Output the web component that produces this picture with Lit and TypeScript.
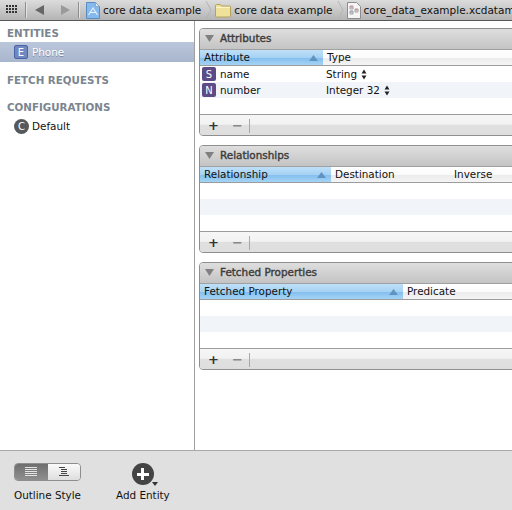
import { LitElement, html, css, svg } from "lit";
import { customElement } from "lit/decorators.js";

const triangle = svg`<svg width="9" height="7" viewBox="0 0 9 7"><path d="M0 0h9L4.500 7z" fill="#808080" /></svg>`;

const sortArrow = svg`<svg class="sort" width="9" height="6" viewBox="0 0 9 6"><path d="M4.500 0L9 6H0z" fill="#5f93c2" /></svg>`;

const stepper = svg`<svg width="6" height="11" viewBox="0 0 6 11"><path d="M3 0.500L5.500 4.500H0.500z M3 10.500L0.500 6.500H5.500z" fill="#222" /></svg>`;

const projectIcon = svg`<svg width="14" height="17" viewBox="0 0 14 17">
	<path d="M0.500 0.500h9l4 4v12h-13z" fill="#86b9ec" stroke="#5a8cc4" />
	<path d="M9.500 0.500v4h4z" fill="#e4eef8" stroke="#8aa8c8" />
	<path d="M2.500 13L7 6L11.500 13M4.500 10.500h5" fill="none" stroke="#e8f2fc" stroke-width="1.1" />
</svg>`;

const folderIcon = svg`<svg width="16" height="15" viewBox="0 0 16 15">
	<path d="M0.500 2.500a1 1 0 0 1 1-1h4l1 1.500h8a1 1 0 0 1 1 1v9a1 1 0 0 1-1 1h-13a1 1 0 0 1-1-1z" fill="#efe09a" stroke="#b3a360" />
	<path d="M1 4.500h14" stroke="#fbf4cc" />
</svg>`;

const modelIcon = svg`<svg width="14" height="17" viewBox="0 0 14 17">
	<path d="M0.500 0.500h9l4 4v12h-13z" fill="#f5f5f5" stroke="#8c8c8c" />
	<path d="M3 4h3v3h-3zM3 9h3v3h-3zM8 7h3v3h-3z" fill="none" stroke="#a0a0a0" />
	<path d="M3.500 5h2M8.500 8h2" stroke="#c86a6a" />
	<path d="M3.500 10h2" stroke="#6a8ac8" />
</svg>`;

const crumbSep = svg`<svg class="crumb-sep" width="7" height="20" viewBox="0 0 7 20"><path d="M1 1L6 10L1 19" fill="none" stroke="#b4b4b4" /></svg>`;

const gridIcon = svg`<svg width="11" height="10" viewBox="0 0 11 10"><path d="M0 0h2v2H0zM3 0h2v2H3zM6 0h2v2H6zM9 0h2v2H9zM0 3h2v2H0zM3 3h2v2H3zM6 3h2v2H6zM9 3h2v2H9zM0 6h2v2H0zM3 6h2v2H3zM6 6h2v2H6zM9 6h2v2H9z" fill="#333" /></svg>`;

const listFlat = svg`<svg width="12" height="10" viewBox="0 0 12 10"><path d="M0 .5h12M0 2.500h12M0 4.500h12M0 6.500h12M0 8.500h12" stroke="#e4e4e4" /></svg>`;

const listTree = svg`<svg width="10" height="10" viewBox="0 0 10 10"><path d="M0 .5h6M2 2.500h6M2 4.500h6M2 6.500h6M0 8.500h10" stroke="#444" /></svg>`;

interface Panel {
	title: string;
	columns: { label: string; width?: number }[];
	rows?: { badge: string; name: string; type: string }[];
}

const panels: Panel[] = [
	{
		title: "Attributes",
		columns: [{ label: "Attribute", width: 123 }, { label: "Type" }],
		rows: [
			{ badge: "S", name: "name", type: "String" },
			{ badge: "N", name: "number", type: "Integer 32" },
		],
	},
	{
		title: "Relationships",
		columns: [{ label: "Relationship", width: 131 }, { label: "Destination", width: 119 }, { label: "Inverse" }],
	},
	{
		title: "Fetched Properties",
		columns: [{ label: "Fetched Property", width: 203 }, { label: "Predicate" }],
	},
];

@customElement("app-root")
export class AppRoot extends LitElement {
	static styles = css`
		:host {
			display: block;
			width: 512px;
			height: 510px;
			overflow: hidden;
			font-family: "DejaVu Sans", sans-serif;
			font-size: 10.4px;
			color: #111;
			background: #fff;
		}

		.app {
			display: grid;
			grid-template-rows: 21px 429px 60px;
			height: 510px;
		}

		.toolbar {
			display: flex;
			align-items: center;
			height: 20px;
			border-bottom: 1px solid #595959;
			background: linear-gradient(#dcdcdc, #b4b4b4);
			white-space: nowrap;
			overflow: hidden;
		}

		.grid-btn {
			display: flex;
			margin: 0 8px 0 6px;
		}

		.tool-sep {
			flex: none;
			width: 1px;
			height: 16px;
			background: #8e8e8e;
			box-shadow: 1px 0 0 #e4e4e4;
		}

		.nav {
			display: flex;
			align-items: center;
			gap: 17px;
			margin: 0 8px 0 9px;
		}

		.nav-left {
			border-style: solid;
			border-width: 5px 9px 5px 0;
			border-color: transparent #666 transparent transparent;
		}

		.nav-right {
			border-style: solid;
			border-width: 5px 0 5px 9px;
			border-color: transparent transparent transparent #9a9a9a;
		}

		.crumb {
			display: flex;
			align-items: center;
			gap: 3px;
			font-size: 10.5px;
			color: #111;
		}

		.crumb-first {
			margin-left: 7px;
		}

		.crumb-sep {
			flex: none;
			margin: 0 3px 0 4px;
		}

		.body {
			display: grid;
			grid-template-columns: 195px 1fr;
			min-height: 0;
		}

		.sidebar {
			border-right: 1px solid #a0a0a0;
			background: #fff;
		}

		.group {
			line-height: 13px;
			padding-left: 7px;
			font-weight: bold;
			font-size: 10.3px;
			color: #7b8590;
		}

		.group.entities {
			padding-top: 6px;
			padding-bottom: 2px;
		}

		.group.fetch {
			margin-top: 12px;
		}

		.group.configs {
			margin: 14px 0 2px;
		}

		.item {
			display: flex;
			align-items: center;
			gap: 4px;
			height: 20px;
			padding-left: 14px;
		}

		.item.selected {
			background: linear-gradient(#bac6da, #a8b6ce);
			color: #fff;
			text-shadow: 0 1px 0 #7f8ca3;
		}

		.badge {
			display: flex;
			align-items: center;
			justify-content: center;
			box-sizing: border-box;
			width: 14px;
			height: 14px;
			border-radius: 2px;
			font-size: 10px;
			color: #fff;
			text-shadow: none;
		}

		.badge.entity {
			background: #7187c0;
			border: 1px solid #4a62a8;
		}

		.badge.attr {
			background: #5c4b84;
		}

		.badge.config {
			border-radius: 50%;
			width: 15px;
			height: 15px;
			margin-right: -1px;
			background: #56595c;
		}

		.main {
			display: flex;
			flex-direction: column;
			gap: 9px;
			padding: 7px 0 0 4px;
			overflow: hidden;
		}

		.panel {
			flex: none;
			width: 330px;
			height: 108px;
			box-sizing: border-box;
			border: 1px solid #8f8f8f;
			border-radius: 4px;
			background: #fff;
			overflow: hidden;
			display: flex;
			flex-direction: column;
		}

		.panel-head {
			display: flex;
			align-items: center;
			gap: 6px;
			flex: none;
			height: 21px;
			padding: 0 0 2px 5px;
			box-sizing: border-box;
			font-size: 10.4px;
			-webkit-text-stroke: 0.4px #3c3c3c;
			color: #3c3c3c;
			background: linear-gradient(#dedede, #c4c4c4);
			border-bottom: 1px solid #a0a0a0;
		}

		.cols {
			display: flex;
			flex: none;
			height: 16px;
			box-sizing: border-box;
			border-bottom: 1px solid #9c9c9c;
			background: linear-gradient(#fff 0, #fbfbfb 50%, #ececec 55%, #f4f4f4 100%);
		}

		.col {
			display: flex;
			align-items: center;
			justify-content: space-between;
			box-sizing: border-box;
			padding: 0 4px 2px;
			flex: none;
		}

		.col.sorted {
			background: linear-gradient(#bfe0f8 0, #a6d2f4 50%, #84bfee 55%, #a4d4f6 100%);
		}

		.sort {
			margin: 2px 1px 0 0;
		}

		.rows {
			flex: 1;
			display: grid;
			grid-template-rows: repeat(3, 16px);
		}

		.row {
			display: flex;
			align-items: center;
		}

		.row.alt {
			background: #f1f5fa;
		}

		.name-cell {
			display: flex;
			align-items: center;
			gap: 4px;
			width: 123px;
			padding-left: 2px;
			box-sizing: border-box;
		}

		.type-cell {
			display: flex;
			align-items: center;
			gap: 4px;
			padding-left: 3px;
		}

		.panel-foot {
			display: flex;
			align-items: center;
			flex: none;
			height: 22px;
			box-sizing: border-box;
			border-top: 1px solid #9c9c9c;
			background: linear-gradient(#f6f6f6 0, #f2f2f2 45%, #e0e0e0 46%, #dedede 100%);
			font-weight: bold;
			font-size: 13px;
			color: #333;
			padding-left: 8px;
		}

		.minus {
			margin-left: 13px;
			color: #888;
		}

		.foot-sep {
			width: 1px;
			height: 14px;
			margin-left: 6px;
			background: #a8a8a8;
		}

		.bottom {
			display: flex;
			gap: 35px;
			box-sizing: border-box;
			border-top: 1px solid #a8a8a8;
			background: #e0e0e0;
			padding: 12px 0 0 14px;
		}

		.tool {
			display: flex;
			flex-direction: column;
			align-items: center;
			gap: 8px;
		}

		.segmented {
			display: flex;
			width: 67px;
			height: 18px;
			box-sizing: border-box;
			border: 1px solid #8e8e8e;
			border-radius: 4px;
			overflow: hidden;
		}

		.segment {
			flex: 1;
			display: flex;
			align-items: center;
			justify-content: center;
			background: linear-gradient(#fafafa, #dedede);
		}

		.segment.on {
			background: linear-gradient(#6f6f6f, #8f8f8f);
		}

		.add {
			position: relative;
			width: 22px;
			height: 22px;
			margin-bottom: -4px;
			border-radius: 50%;
			background: #444;
		}

		.add::before {
			content: "";
			position: absolute;
			left: 5px;
			top: 9.5px;
			width: 12px;
			height: 3px;
			background: #fff;
		}

		.add::after {
			content: "";
			position: absolute;
			left: 9.5px;
			top: 5px;
			width: 3px;
			height: 12px;
			background: #fff;
		}

		.add-caret {
			position: absolute;
			right: -4px;
			bottom: -1px;
			border-style: solid;
			border-width: 4px 3px 0;
			border-color: #333 transparent transparent;
		}
	`;

	renderPanel(panel: Panel) {
		const rows = panel.rows ?? [];
		return html`
			<section class="panel">
				<div class="panel-head">${triangle}<span>${panel.title}</span></div>
				<div class="cols">
					${panel.columns.map(
						(col, i) => html`
							<div class="col ${i === 0 ? "sorted" : ""}" style=${col.width ? `width:${col.width}px` : ""}>
								<span>${col.label}</span>${i === 0 ? sortArrow : ""}
							</div>
						`,
					)}
				</div>
				<div class="rows">
					${[0, 1, 2].map((i) => {
						const row = rows[i];
						return html`
							<div class="row ${i === 1 ? "alt" : ""}">
								${row
									? html`
											<div class="name-cell"><span class="badge attr">${row.badge}</span>${row.name}</div>
											<div class="type-cell">${row.type}${stepper}</div>
										`
									: ""}
							</div>
						`;
					})}
				</div>
				<div class="panel-foot">
					<span>+</span><span class="minus">−</span><span class="foot-sep"></span>
				</div>
			</section>
		`;
	}

	render() {
		return html`
			<div class="app">
				<header class="toolbar">
					<span class="grid-btn">${gridIcon}</span>
					<span class="tool-sep"></span>
					<div class="nav"><span class="nav-left"></span><span class="nav-right"></span></div>
					<span class="tool-sep"></span>
					<span class="crumb crumb-first">${projectIcon}core data example</span>
					${crumbSep}
					<span class="crumb">${folderIcon}core data example</span>
					${crumbSep}
					<span class="crumb">${modelIcon}core_data_example.xcdatamodel</span>
				</header>
				<div class="body">
					<aside class="sidebar">
						<div class="group entities">ENTITIES</div>
						<div class="item selected"><span class="badge entity">E</span>Phone</div>
						<div class="group fetch">FETCH REQUESTS</div>
						<div class="group configs">CONFIGURATIONS</div>
						<div class="item"><span class="badge config">C</span>Default</div>
					</aside>
					<main class="main">${panels.map((p) => this.renderPanel(p))}</main>
				</div>
				<footer class="bottom">
					<div class="tool">
						<div class="segmented">
							<span class="segment on">${listFlat}</span>
							<span class="segment">${listTree}</span>
						</div>
						<span>Outline Style</span>
					</div>
					<div class="tool">
						<div class="add"><span class="add-caret"></span></div>
						<span>Add Entity</span>
					</div>
				</footer>
			</div>
		`;
	}
}
